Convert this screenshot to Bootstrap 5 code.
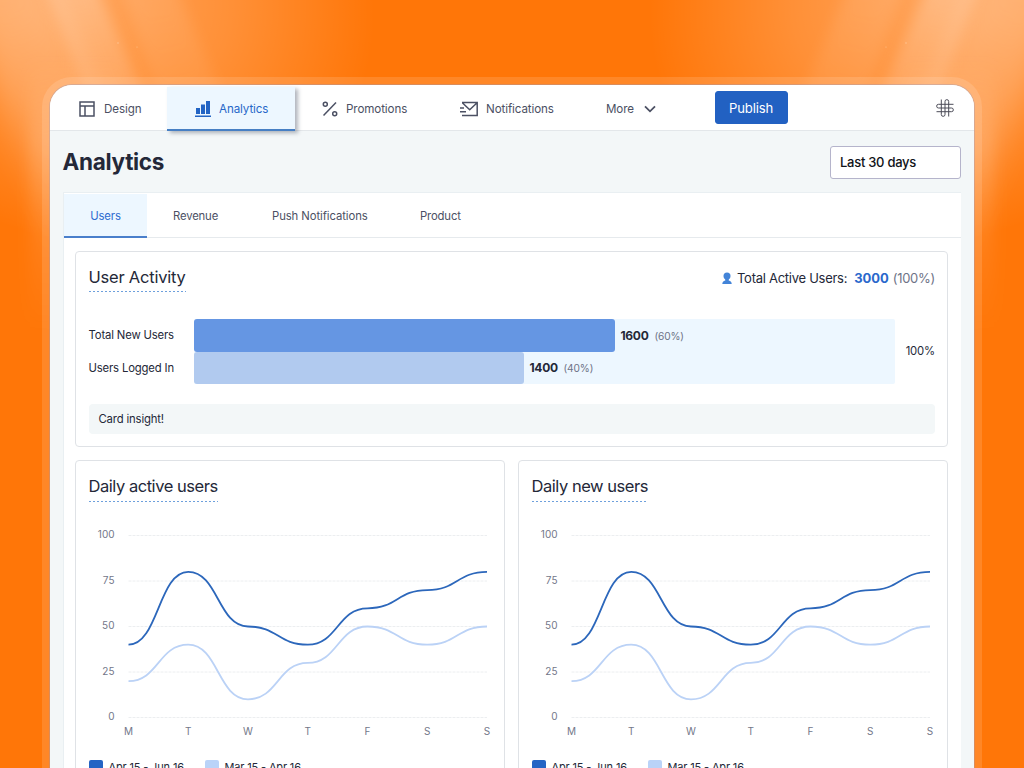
<!DOCTYPE html>
<html lang="en">
<head>
<meta charset="utf-8">
<meta name="viewport" content="width=device-width, initial-scale=1">
<title>Analytics</title>
<link href="https://cdn.jsdelivr.net/npm/bootstrap@5.3.0/dist/css/bootstrap.min.css" rel="stylesheet">
<style>
  :root { --ink:#242838; --slate:#4b5063; --blue:#2264c4; --line:#e3e7ea; --mist:#f3f7f8; --sky:#edf7ff; }
  body { width:1024px; height:768px; overflow:hidden; background:#ff7608; font-family:Inter,"Liberation Sans",sans-serif; font-size:11.3px; letter-spacing:-.15px; line-height:16px; color:var(--ink); white-space:nowrap; }
  .backdrop { position:absolute; inset:0; z-index:-1; }
  .stage { padding:85px 50px 0; }
  .shell { height:683px; background:var(--mist); border-radius:22px 22px 0 0; box-shadow:0 0 0 1px rgba(150,150,190,.35), 0 0 0 8px rgba(255,255,255,.13); overflow:hidden; }
  .topbar { height:46px; background:#fff; border-bottom:1px solid var(--line); color:var(--slate); font-size:11.6px; letter-spacing:-.1px; }
  .topbar svg { flex:none; }
  .top-item { height:48px; }
  .top-item.current { width:128px; height:44px; margin-top:2px; padding:1px 0 0 28px; background:var(--sky); color:#2767c9; border-bottom:2px solid #467fc4; box-shadow:3px 2px 4px rgba(60,70,90,.4); z-index:2; }
  .btn-publish { --bs-btn-bg:#2261c2; --bs-btn-color:#fff; --bs-btn-border-color:#2261c2; width:73px; height:33px; margin-top:6px; padding:0; border-radius:3px; font-size:13.1px; letter-spacing:-.15px; line-height:33px; }
  .page-head { height:61px; padding:14px 13px 0 12.500px; }
  .page-title { font-size:22.500px; line-height:28px; font-weight:700; letter-spacing:-.3px; padding-top:3px; }
  .range { width:131px; height:33px; margin-top:.5px; border:1px solid #b5b4cb; border-radius:3px; background:#fff; color:#111318; font-size:13px; line-height:31px; padding-left:9px; font-weight:500; letter-spacing:-.28px; }
  .panel { margin:0 13px; width:898px; height:600px; background:#fff; border:1px solid #e9eff2; border-right:0; }
  .tabs { height:45px; border-bottom:1px solid #e6eaed; color:var(--slate); }
  .tabs > div { line-height:46px; }
  .tabs .current { width:83px; height:44px; margin-top:1px; line-height:44px; background:var(--sky); color:#2d6bd0; border-bottom:2px solid #4a7fcb; }
  .tile { border:1px solid #dfe2e6; border-radius:4px; background:#fff; padding:0 12px 0 12.500px; }
  .tile-title { display:inline-block; font-size:16.500px; line-height:24px; letter-spacing:-.22px; padding-bottom:3px; background:repeating-linear-gradient(90deg,#6ea0dc 0 2px,transparent 2px 4px) left bottom/100% 1px no-repeat; }
  .tile-title.tight { letter-spacing:-.46px; padding-bottom:4px; }
  .track { width:701px; height:65px; background:var(--sky); border-radius:2px; }
  .meter { height:33px; border-radius:3px; }
  .meter.fresh { background:#6596e3; }
  .meter.logged { background:#b1caef; height:32px; }
  .count { width:34px; margin-left:6px; font-size:12px; letter-spacing:-.3px; }
  .pct { font-size:10.200px; letter-spacing:-.15px; }
  .soft { color:#6f7487; }
  .insight { height:30px; background:var(--mist); border-radius:4px; padding-left:10px; line-height:31px; }
  .chart { overflow:visible; letter-spacing:0; }
  .chart text { font-size:10px; fill:#737789; }
  .key { width:14px; height:14px; border-radius:2px; flex:none; }
  .legend-row { margin-top:11.500px; font-size:11px; letter-spacing:-.15px; }
</style>
</head>
<body>
<svg class="backdrop" width="1024" height="768" viewBox="0 0 1024 768" aria-hidden="true">
  <defs>
    <linearGradient id="fade" gradientUnits="userSpaceOnUse" x1="40" y1="0" x2="110" y2="260"><stop offset="0" stop-color="#fff"/><stop offset=".4" stop-color="#fff" stop-opacity=".6"/><stop offset="1" stop-color="#fff" stop-opacity="0"/></linearGradient>
    <radialGradient id="glow" gradientUnits="userSpaceOnUse" cx="0" cy="0" r="1" gradientTransform="translate(90 -10) rotate(22) scale(290 250)"><stop offset="0" stop-color="#fff" stop-opacity=".34"/><stop offset=".5" stop-color="#fff" stop-opacity=".19"/><stop offset="1" stop-color="#fff" stop-opacity="0"/></radialGradient>
    <linearGradient id="side" x1="0" y1="0" x2="0" y2="1"><stop offset="0" stop-color="#fff" stop-opacity="0"/><stop offset=".3" stop-color="#fff" stop-opacity=".14"/><stop offset="1" stop-color="#fff" stop-opacity="0"/></linearGradient>
    <filter id="b1" x="-50%" y="-50%" width="200%" height="200%"><feGaussianBlur stdDeviation="7"/></filter>
    <filter id="b2" x="-50%" y="-50%" width="200%" height="200%"><feGaussianBlur stdDeviation="14"/></filter>
    <g id="rays">
      <path d="M0 0H420V330H0Z" fill="url(#glow)"/>
      <path d="M30 60H120V330H30Z" fill="url(#side)" filter="url(#b1)"/>
      <path d="M-60-60H30L170 260H60Z" fill="url(#fade)" opacity=".24" filter="url(#b2)"/>
      <path d="M30-50H80L205 230H140Z" fill="url(#fade)" opacity=".24" filter="url(#b1)"/>
      <path d="M110-50H160L280 230H200Z" fill="url(#fade)" opacity=".1" filter="url(#b1)"/>
    </g>
  </defs>
  <use href="#rays"/>
  <use href="#rays" transform="translate(1024 0) scale(-1 1)"/>
  <g fill="#ffd0a4" opacity=".7"><circle cx="118" cy="43" r=".8"/><circle cx="137" cy="47" r=".6"/><circle cx="906" cy="43" r=".8"/><circle cx="886" cy="47" r=".6"/></g>
</svg>

<main class="stage">
<div class="shell">
  <nav class="topbar d-flex">
    <div class="top-item d-flex align-items-center" style="width:117px;padding-left:29px">
      <svg width="17" height="16" fill="none" stroke="#4b5063" stroke-width="1.500"><path d="M1 1h14v14H1zM1 5h14M6 5v10"/></svg>
      <span class="ms-2">Design</span>
    </div>
    <div class="top-item current d-flex align-items-center">
      <svg width="16" height="18" fill="#2264c4"><path d="M1 8h4v6H1zM6 4.500h4V14H6zM11 1h4v13h-4zM0 15.500h16V17H0z"/></svg>
      <span class="ms-2">Analytics</span>
    </div>
    <div class="top-item d-flex align-items-center" style="width:138px;padding-left:27px">
      <svg width="16" height="16" fill="none" stroke="#4b5063" stroke-width="1.500"><circle cx="3.300" cy="3.300" r="2"/><circle cx="12.700" cy="12.700" r="2"/><path d="M14 1.500 1.500 14.500"/></svg>
      <span class="ms-2">Promotions</span>
    </div>
    <div class="top-item d-flex align-items-center" style="width:146px;padding-left:27px">
      <svg width="18" height="16" fill="none" stroke="#4b5063" stroke-width="1.500"><path d="M2 1.500h15.200v13H2M2.300 1.800l7.400 7 7.400-7M0 7h4M0 10.800h6"/></svg>
      <span class="ms-2">Notifications</span>
    </div>
    <div class="top-item d-flex align-items-center" style="width:135.500px;padding-left:27px">
      <span style="width:38px">More</span>
      <svg width="12" height="8" fill="none" stroke="#4b5063" stroke-width="1.800"><path d="m1 1.300 5 5 5-5"/></svg>
    </div>
    <button class="btn btn-publish">Publish</button>
    <svg class="ms-auto" width="18" height="18" viewBox="0 0 18 18" fill="none" stroke="#4c4c58" style="margin:14px 20px 0 0"><path d="M5.300.5V15.500a1.850 1.850 0 0 0 3.700 0V2.500a1.850 1.850 0 0 1 3.700 0V17.500M17.500 5.300H2.500a1.850 1.850 0 0 0 0 3.700H15.500a1.850 1.850 0 0 1 0 3.700H.5"/></svg>
  </nav>
  <header class="page-head d-flex justify-content-between">
    <h1 class="page-title m-0">Analytics</h1>
    <div class="range">Last 30 days</div>
  </header>
  <section class="panel">
    <div class="tabs d-flex">
      <div class="current text-center">Users</div>
      <div style="width:99px;padding-left:26px">Revenue</div>
      <div style="width:148px;padding-left:26px;letter-spacing:-.08px">Push Notifications</div>
      <div style="padding-left:26px">Product</div>
    </div>
    <div style="padding:13px 12px 0 11px">
      <article class="tile" style="height:196px;width:873px">
        <div class="d-flex justify-content-between" style="padding-top:13px;height:67px">
          <div><span class="tile-title">User Activity</span></div>
          <div class="d-flex" style="font-size:13px;line-height:27px;letter-spacing:-.27px">
            <svg width="10" height="13" fill="#4384d8" style="margin:7px 5px 0 0"><circle cx="5" cy="4" r="3.500"/><path d="M3 6h4l-.3 2.500c2 .4 3 1.600 3 3.500H.3c0-1.900 1-3.100 3-3.500z"/></svg>
            <span style="margin-right:7px">Total Active Users:</span><b class="fw-bold" style="color:#2a68cc;margin-right:4px;letter-spacing:-.05px">3000</b><span class="soft">(100%)</span>
          </div>
        </div>
        <div class="d-flex">
          <div style="width:105px"><div style="line-height:33px">Total New Users</div><div style="line-height:33px">Users Logged In</div></div>
          <div class="track">
            <div class="d-flex align-items-center"><div class="meter fresh" style="width:421px"></div><b class="count">1600</b><span class="soft pct">(60%)</span></div>
            <div class="d-flex align-items-center"><div class="meter logged" style="width:330px"></div><b class="count">1400</b><span class="soft pct">(40%)</span></div>
          </div>
          <div class="ms-auto" style="line-height:65px">100%</div>
        </div>
        <div class="insight" style="margin-top:19px">Card insight!</div>
      </article>
      <div class="d-flex" style="gap:13px;margin-top:13px" id="charts"></div>
    </div>
  </section>
</div>
</main>
<script>
  const days = ['M','T','W','T','F','S','S'];
  const series = [[20,40,10,30,50,40,50,'#bbd2f6'],[40,80,50,40,60,70,80,'#2c67bb']];
  const step = 59.75, px = i => 39.5 + i * step, py = v => 198.5 - v * 1.82;
  const curve = s => 'M' + px(0) + ' ' + py(s[0]) + days.slice(1).map((_, i) => {
    const m = px(i) + step / 2;
    return `C${m} ${py(s[i])} ${m} ${py(s[i+1])} ${px(i+1)} ${py(s[i+1])}`;
  }).join('');
  document.getElementById('charts').innerHTML = ['Daily active users','Daily new users'].map(t => `
    <article class="tile" style="width:430px;height:340px">
      <div style="padding-top:13px;height:58px"><span class="tile-title tight">${t}</span></div>
      <svg class="chart d-block" width="404" height="228">
        ${[0,25,50,75,100].map(v => `<path d="M39.500 ${py(v)}H398" stroke="#eceef0" stroke-dasharray="3 1"/><text x="25.500" y="${py(v)+2.5}" text-anchor="end">${v}</text>`).join('')}
        ${series.map(s => `<path d="${curve(s)}" fill="none" stroke="${s[7]}" stroke-width="1.800"/>`).join('')}
        ${days.map((d, i) => `<text x="${px(i)}" y="216" text-anchor="middle">${d}</text>`).join('')}
      </svg>
      <div class="legend-row d-flex align-items-center"><i class="key" style="background:#2564c4"></i><span style="width:95px;padding-left:6px;margin-right:7px">Apr 15 - Jun 16</span><i class="key" style="background:#bad3f8"></i><span style="padding-left:6px">Mar 15 - Apr 16</span></div>
    </article>`).join('');
</script>
<script src="https://cdn.jsdelivr.net/npm/bootstrap@5.3.0/dist/js/bootstrap.bundle.min.js"></script>
</body>
</html>
